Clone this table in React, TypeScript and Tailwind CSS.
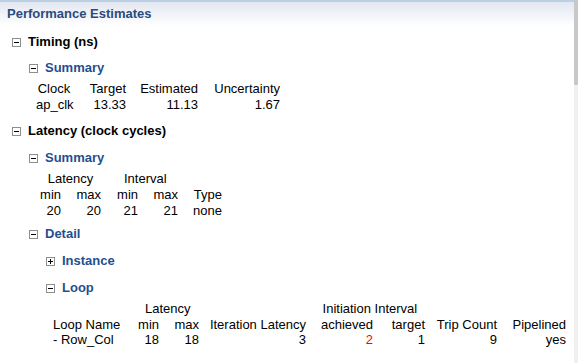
import React from "react";

const font = { fontFamily: '"Liberation Sans", Arial, sans-serif' };

function Box({ plus }: { plus?: boolean }) {
  return (
    <svg width="9" height="9" viewBox="0 0 9 9" className="shrink-0">
      <rect x="0.5" y="0.5" width="8" height="8" fill="#fff" stroke="#8e8e8e" />
      <line x1="2" y1="4.5" x2="7" y2="4.5" stroke="#000" />
      {plus && <line x1="4.5" y1="2" x2="4.5" y2="7" stroke="#000" />}
    </svg>
  );
}

function Heading({
  level,
  text,
  plus,
  className,
}: {
  level: 0 | 1 | 2;
  text: string;
  plus?: boolean;
  className?: string;
}) {
  const pl = level === 0 ? "pl-[12px]" : level === 1 ? "pl-[29px]" : "pl-[46px]";
  const color = level === 0 ? "text-black" : "text-[#1f4f8f]";
  return (
    <div className={`flex items-center h-[16px] gap-[7px] ${pl} ${className ?? ""}`}>
      <Box plus={plus} />
      <span className={`font-bold text-[13px] leading-[16px] ${color}`}>{text}</span>
    </div>
  );
}

export default function App() {
  return (
    <div className="w-[578px] h-[363px] overflow-hidden bg-white flex text-[13px] leading-[16px] text-black" style={font}>
      <div className="flex-1 flex flex-col">
        <div className="h-[26px] border-t-[2px] border-[#bcd0e4] bg-gradient-to-b from-[#e2e7f1] to-[#ffffff] flex items-center pl-[7px]">
          <span className="font-bold text-[13px] text-[#2a4b7c]">Performance Estimates</span>
        </div>

        <Heading level={0} text="Timing (ns)" className="mt-[8px]" />
        <Heading level={1} text="Summary" className="mt-[10px]" />
        <div className="mt-[5px] ml-[36px] grid grid-cols-[36px_54px_72px_82px]">
          <span className="text-center">Clock</span>
          <span className="text-right">Target</span>
          <span className="text-right">Estimated</span>
          <span className="text-right">Uncertainty</span>
          <span className="text-center">ap_clk</span>
          <span className="text-right">13.33</span>
          <span className="text-right">11.13</span>
          <span className="text-right">1.67</span>
        </div>

        <Heading level={0} text="Latency (clock cycles)" className="mt-[10px]" />
        <Heading level={1} text="Summary" className="mt-[11px]" />
        <div className="mt-[5px] ml-[38px] flex">
          <span className="w-[63px] text-center pl-[2px]">Latency</span>
          <span className="ml-[23px]">Interval</span>
        </div>
        <div className="ml-[38px] grid grid-cols-[23px_40px_37px_40px_44px]">
          <span className="text-right">min</span>
          <span className="text-right">max</span>
          <span className="text-right">min</span>
          <span className="text-right">max</span>
          <span className="text-right">Type</span>
          <span className="text-right">20</span>
          <span className="text-right">20</span>
          <span className="text-right">21</span>
          <span className="text-right">21</span>
          <span className="text-right">none</span>
        </div>

        <Heading level={1} text="Detail" className="mt-[7px]" />
        <Heading level={2} text="Instance" plus className="mt-[11px]" />
        <Heading level={2} text="Loop" className="mt-[11px]" />

        <div className="mt-[5px] ml-[53px] flex">
          <span className="ml-[92px]">Latency</span>
          <span className="ml-[132px]">Initiation Interval</span>
        </div>
        <div className="ml-[53px] grid grid-cols-[85px_21px_40px_107px_67px_52px_72px_69px] leading-[15px]">
          <span>Loop Name</span>
          <span className="text-right">min</span>
          <span className="text-right">max</span>
          <span className="text-right">Iteration Latency</span>
          <span className="text-right">achieved</span>
          <span className="text-right">target</span>
          <span className="text-right">Trip Count</span>
          <span className="text-right">Pipelined</span>
          <span>- Row_Col</span>
          <span className="text-right">18</span>
          <span className="text-right">18</span>
          <span className="text-right">3</span>
          <span className="text-right text-[#ff0000]">2</span>
          <span className="text-right">1</span>
          <span className="text-right">9</span>
          <span className="text-right">yes</span>
        </div>
      </div>
      <div className="w-[4px] flex flex-col bg-[#f0f0f0]">
        <div className="h-[85px] bg-[#c8c8c8]" />
      </div>
    </div>
  );
}
